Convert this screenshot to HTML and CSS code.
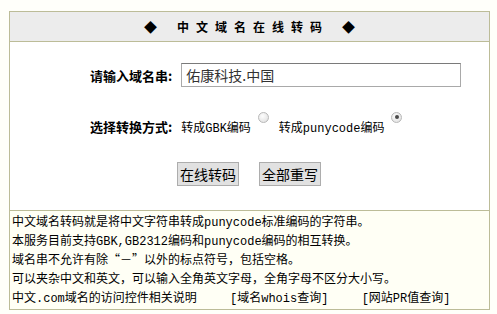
FILE: index.html
```html
<!DOCTYPE html>
<html lang="zh-CN">
<head>
  <meta charset="UTF-8" />
  <title>中文域名在线转码</title>
  <link rel="stylesheet" href="styles.css">
</head>
<body>
  <div class="panel">
    <div class="panel-head">
      <span class="diamond">◆</span>
      <span class="title">中文域名在线转码</span>
      <span class="diamond">◆</span>
    </div>

    <form class="panel-body">
      <div class="row">
        <span class="label">请输入域名串:</span>
        <input class="domain" type="text" value="佑康科技.中国">
      </div>
      <div class="row">
        <span class="label">选择转换方式:</span>
        <label class="choice">转成GBK编码<input type="radio" name="mode"></label>
        <label class="choice">转成punycode编码<input type="radio" name="mode" checked></label>
      </div>
      <div class="buttons">
        <button type="button" class="btn">在线转码</button>
        <button type="reset" class="btn">全部重写</button>
      </div>
    </form>

    <div class="panel-foot">
      <p>中文域名转码就是将中文字符串转成punycode标准编码的字符串。</p>
      <p>本服务目前支持GBK,GB2312编码和punycode编码的相互转换。</p>
      <p>域名串不允许有除<span class="cjk">“－”</span>以外的标点符号，包括空格。</p>
      <p>可以夹杂中文和英文，可以输入全角英文字母，全角字母不区分大小写。</p>
      <p class="links">
        <a href="#">中文.com域名的访问控件相关说明</a>
        <a href="#">[域名whois查询]</a>
        <a href="#">[网站PR值查询]</a>
      </p>
    </div>
  </div>
</body>
</html>
```

FILE: styles.css
```css
body {
  margin: 0;
  padding: 11px 7px 0 9px;
  background: #fffffa;
  font-family: "Liberation Mono", "Noto Sans CJK SC", monospace;
  font-size: 12px;
  color: #000;
}

.panel {
  width: 481px;
  box-sizing: border-box;
  border: 1px solid #bcbc98;
}

.panel-head {
  height: 29px;
  background: #ececec;
  border-bottom: 1px solid #bcbc98;
  display: flex;
  align-items: center;
  justify-content: center;
  gap: 20px;
  font-family: "Noto Sans CJK SC", sans-serif;
  font-weight: bold;
  font-size: 12px;
}

.diamond {
  font-size: 13px;
}

.title {
  letter-spacing: 7px;
  margin-right: -7px;
}

.panel-body {
  margin: 0;
  background: #fff;
  padding: 21px 0 24px 80px;
  display: flex;
  flex-direction: column;
  gap: 30px;
}

.row {
  display: flex;
  align-items: center;
}

.label {
  font-family: "Noto Sans CJK SC", sans-serif;
  font-weight: bold;
  font-size: 13px;
  margin-right: 9px;
}

.domain {
  width: 280px;
  height: 24px;
  box-sizing: border-box;
  border: 1px solid #a9a9a9;
  border-top-color: #7a7a7a;
  padding: 0 4px;
  font-family: "Noto Sans CJK SC", sans-serif;
  font-size: 14px;
  color: #333;
}

.choice {
  display: flex;
  align-items: flex-start;
  font-size: 12px;
  margin-right: 10px;
}

.choice input {
  appearance: none;
  width: 11px;
  height: 11px;
  margin: -6px 0 0 7px;
  border: 1px solid #b8b8b8;
  border-radius: 50%;
  background: radial-gradient(circle at 40% 35%, #fdfdfd, #dcdcdc);
  position: relative;
}

.choice input:checked::after {
  content: "";
  position: absolute;
  left: 2.5px;
  top: 2.5px;
  width: 4px;
  height: 4px;
  border-radius: 50%;
  background: #4a4a4a;
}

.buttons {
  display: flex;
  gap: 20px;
  padding-left: 87px;
  margin-top: -4px;
}

.btn {
  height: 24px;
  padding: 0 2px;
  font-family: "Noto Sans CJK SC", sans-serif;
  font-size: 14px;
  color: #000;
  background: #e1e1e1;
  border: 1px solid #adadad;
}

.panel-foot {
  border-top: 1px solid #bcbc98;
  background: #fffff5;
  padding: 3px 2px 0;
}

.panel-foot p {
  margin: 0;
  height: 19px;
  line-height: 19px;
}

.cjk {
  font-family: "Noto Sans CJK SC", sans-serif;
  line-height: 1;
}

.panel-foot a {
  color: #000;
  text-decoration: none;
}

.links a + a {
  margin-left: 26px;
}
```
